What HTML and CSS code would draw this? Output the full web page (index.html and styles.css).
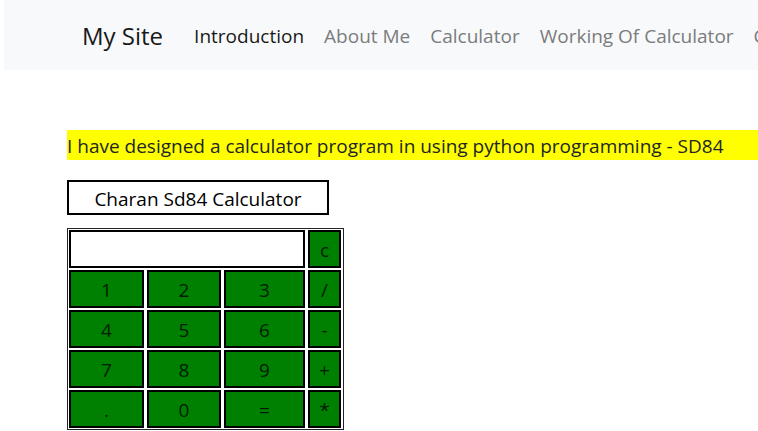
FILE: index.html
```html
<!DOCTYPE html>
<html lang="en">
<head>
<meta charset="utf-8">
<title>My Site</title>
<link rel="stylesheet" href="styles.css">
</head>
<body>
<nav class="navbar">
  <a class="brand" href="#">My Site</a>
  <a class="link active" href="#intro">Introduction</a>
  <a class="link" href="#about">About Me</a>
  <a class="link" href="#calculator">Calculator</a>
  <a class="link" href="#working">Working Of Calculator</a>
  <a class="link" href="#contact">Contact</a>
</nav>
<main class="content">
  <p class="intro" id="intro">I have designed a calculator program in using python programming - SD84</p>
  <h1 class="title">Charan Sd84 Calculator</h1>
  <form class="calc" id="calculator">
    <input class="display" type="text" aria-label="Result">
    <button class="key" type="button">c</button>
    <button class="key" type="button">1</button>
    <button class="key" type="button">2</button>
    <button class="key" type="button">3</button>
    <button class="key" type="button">/</button>
    <button class="key" type="button">4</button>
    <button class="key" type="button">5</button>
    <button class="key" type="button">6</button>
    <button class="key" type="button">-</button>
    <button class="key" type="button">7</button>
    <button class="key" type="button">8</button>
    <button class="key" type="button">9</button>
    <button class="key" type="button">+</button>
    <button class="key" type="button">.</button>
    <button class="key" type="button">0</button>
    <button class="key" type="button">=</button>
    <button class="key" type="button">*</button>
  </form>
</main>
</body>
</html>
```
FILE: styles.css
```css
* {
  box-sizing: border-box;
}

body {
  margin: 0;
  background: #fff;
  color: #212529;
  font: 19px/28px "Open Sans", "Noto Sans", sans-serif;
}

.navbar {
  display: flex;
  align-items: center;
  margin-left: 4px;
  padding: 18px 0 16px 78px;
  overflow: hidden;
  background: #f8f9fb;
  white-space: nowrap;
}

.navbar a {
  flex: none;
  text-decoration: none;
}

.brand {
  margin-right: 21px;
  font-size: 24px;
  line-height: 36px;
  color: #191919;
}

.link {
  padding: 0 10px;
  color: #7b7c7d;
}

.active {
  color: #191919;
}

.content {
  padding: 60px 0 0 67px;
}

.intro {
  margin: 0 0 20px;
  padding-top: 2px;
  background: #ff0;
}

.title {
  width: 262px;
  margin: 0 0 13px;
  padding-top: 3px;
  border: 2px solid #000;
  font-size: 19px;
  font-weight: 400;
  text-align: center;
  color: #000;
}

.calc {
  display: grid;
  grid-template-columns: 75px 74px 81px 33px;
  grid-auto-rows: 38px;
  gap: 2px 3px;
  width: max-content;
  padding: 1px 2px 1px 1px;
  border: 1px solid #212529;
}

.display,
.key {
  min-width: 0;
  margin: 0;
  border: 2px solid #000;
  border-radius: 0;
  font: inherit;
}

.display {
  grid-column: span 3;
  padding: 0 8px;
  background: #fff;
}

.key {
  padding: 2px 0 0;
  background: #008000;
  color: #001c00;
  text-align: center;
}
```
